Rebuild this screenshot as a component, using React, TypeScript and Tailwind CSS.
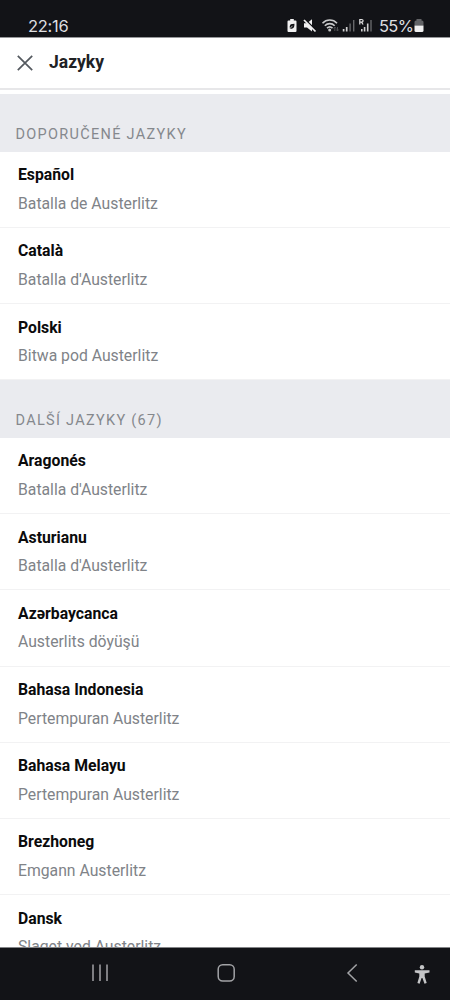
import React from "react";

const suggested = [
	{ name: "Español", title: "Batalla de Austerlitz" },
	{ name: "Català", title: "Batalla d'Austerlitz" },
	{ name: "Polski", title: "Bitwa pod Austerlitz" },
];

const others = [
	{ name: "Aragonés", title: "Batalla d'Austerlitz" },
	{ name: "Asturianu", title: "Batalla d'Austerlitz" },
	{ name: "Azərbaycanca", title: "Austerlits döyüşü" },
	{ name: "Bahasa Indonesia", title: "Pertempuran Austerlitz" },
	{ name: "Bahasa Melayu", title: "Pertempuran Austerlitz" },
	{ name: "Brezhoneg", title: "Emgann Austerlitz" },
	{ name: "Dansk", title: "Slaget ved Austerlitz" },
];

const StatusIcons = () => (
	<svg width="86" height="18" viewBox="286 16 86 18" fill="none">
		{/* Battery saver */}
		<path
			d="M290.200 19h3.600v1.400h1.700a1 1 0 0 1 1 1V31a1 1 0 0 1-1 1h-7a1 1 0 0 1-1-1v-9.600a1 1 0 0 1 1-1h1.700z"
			fill="#f0f0f1"
		/>
		<path d="M289.800 28.700v-2.400c0-1.700 1.200-2.500 4.700-2.500 0 3.400-1 4.900-2.800 4.900z" fill="#121317" />
		<path d="m289.500 29 3-3.200" stroke="#f0f0f1" strokeWidth=".7" />
		{/* Muted speaker */}
		<path d="M304 23.300h3l5-4.100v12.400l-5-4.100h-3z" fill="#f0f0f1" />
		<path d="m304.700 19 11.600 11.600" stroke="#121317" strokeWidth="1.600" />
		<path d="m304 20 11.500 11.500" stroke="#f0f0f1" strokeWidth="1.700" />
		{/* Wifi */}
		<g stroke="#c8c9ca" strokeWidth="1.600">
			<path d="M322.500 23.200c4-4.200 10.500-4.200 14.500 0" />
			<path d="M324.800 25.700c2.800-2.800 7.100-2.800 9.900 0" />
			<path d="M327 28.100c1.600-1.500 3.900-1.500 5.500 0" />
		</g>
		<circle cx="329.700" cy="30" r="1.500" fill="#c8c9ca" />
		<path d="M334.800 31v-4m-1.300 1.500 1.300-1.500 1.300 1.500M337.500 27v4m-1.200-1.500 1.200 1.500 1.200-1.500" stroke="#4c4d50" />
		{/* First signal */}
		<path d="M343.600 29v2.500M346.700 27v4.500" stroke="#d0d0d1" strokeWidth="1.700" />
		<path d="M350.100 23.500v8M353.700 20v11.500" stroke="#66676a" strokeWidth="1.400" />
		{/* Roaming signal */}
		<path d="M361.800 29v2.500M364.600 27v4.500M367.700 23.500v8" stroke="#d0d0d1" strokeWidth="1.600" />
		<path d="M371 20v11.500" stroke="#66676a" strokeWidth="1.400" />
		<path d="M359.800 24.500v-5h1.800c2 0 2 2.600 0 2.600h-1.800m1.700 0 1.600 2.400" stroke="#e0e0e1" strokeWidth="1.200" />
	</svg>
);

const StatusBar = () => (
	<div className="flex h-[37px] shrink-0 items-start bg-[#121317] pl-[27px] text-[#dedfe0]">
		<span className="mt-[15px] w-[259px] pl-px font-['Inter',sans-serif] text-[16.5px] leading-[22px] tracking-[-0.3px]">
			22:16
		</span>
		<div className="mt-4">
			<StatusIcons />
		</div>
		<span className="mt-[15px] ml-[7px] w-[34px] whitespace-nowrap font-['Inter',sans-serif] text-[16.5px] leading-[22px] tracking-[-0.7px]">
			55%
		</span>
		<svg width="10" height="14" viewBox="0 0 10 14" className="mt-[19px] ml-px">
			<path d="M2.500 0h5v1.500H8a1.500 1.500 0 0 1 1.500 1.500v3.500H.5V3A1.500 1.500 0 0 1 2 1.500h.5z" fill="#626366" />
			<path d="M.5 6.500h9v5A1.500 1.500 0 0 1 8 13H2a1.500 1.500 0 0 1-1.500-1.500z" fill="#f0f0f0" />
		</svg>
	</div>
);

const SectionTitle = ({ children }: { children: React.ReactNode }) => (
	<h2 className="h-[57.7px] bg-[#eaebef] pl-[15.5px] pt-[31px] text-[14.5px] leading-5 tracking-[1.3px] text-[#85888d]">
		{children}
	</h2>
);

const LanguageList = ({ items }: { items: { name: string; title: string }[] }) => (
	<ul>
		{items.map((item) => (
			<li
				key={item.name}
				className="h-[76.2px] border-b border-[#f2f2f3] pl-[18px] pt-[13.5px]"
			>
				<p className="text-[15.75px] leading-5 font-bold text-[#0b0b0c]">{item.name}</p>
				<p className="mt-[8.5px] text-[15.75px] leading-5 text-[#808388]">
					{item.title}
				</p>
			</li>
		))}
	</ul>
);

const NavBar = () => (
	<div className="h-[53px] shrink-0 border-t border-[#838487] bg-[#121317]">
		<svg width="450" height="52" viewBox="0 948 450 52" fill="none" stroke="#a2a3a6" strokeWidth="1.500">
			<path d="M93 964.500V981M100 964.500V981M107 964.500V981" />
			<rect x="218.200" y="964.700" width="16" height="16.300" rx="4.500" />
			<path d="m356.700 964.500-8.700 8.500 8.700 8.500" />
			<g fill="#c4c5c7" stroke="none">
				<circle cx="422" cy="967.300" r="2.200" />
				<path d="M414.800 970.300h14.700v2.300l-4.800.8v3.200l2 6.500-2.200.7-2.100-5.800h-.8l-2 5.800-2.200-.7 1.900-6.500v-3.200l-4.500-.8z" />
			</g>
		</svg>
	</div>
);

const App = () => {
	return (
		<div className="flex h-[1000px] w-[450px] flex-col overflow-hidden bg-white font-['Roboto',sans-serif]">
			<StatusBar />
			<header className="flex h-[53px] shrink-0 items-center border-t border-b-2 border-t-[#96979a] border-b-[#e7e7e9] pl-[17px]">
				<svg width="16" height="16" viewBox="0 0 16 16" stroke="#54595f" strokeWidth="1.700">
					<path d="m.8.800 14.400 14.400M15.200.800.8 15.200" />
				</svg>
				<h1 className="mb-[2px] ml-4 text-[17.5px] leading-6 font-bold text-[#202124]">
					Jazyky
				</h1>
			</header>
			<main className="min-h-0 flex-1 overflow-hidden pt-1">
				<SectionTitle>DOPORUČENÉ JAZYKY</SectionTitle>
				<LanguageList items={suggested} />
				<SectionTitle>DALŠÍ JAZYKY (67)</SectionTitle>
				<LanguageList items={others} />
			</main>
			<NavBar />
		</div>
	);
};

export default App;
